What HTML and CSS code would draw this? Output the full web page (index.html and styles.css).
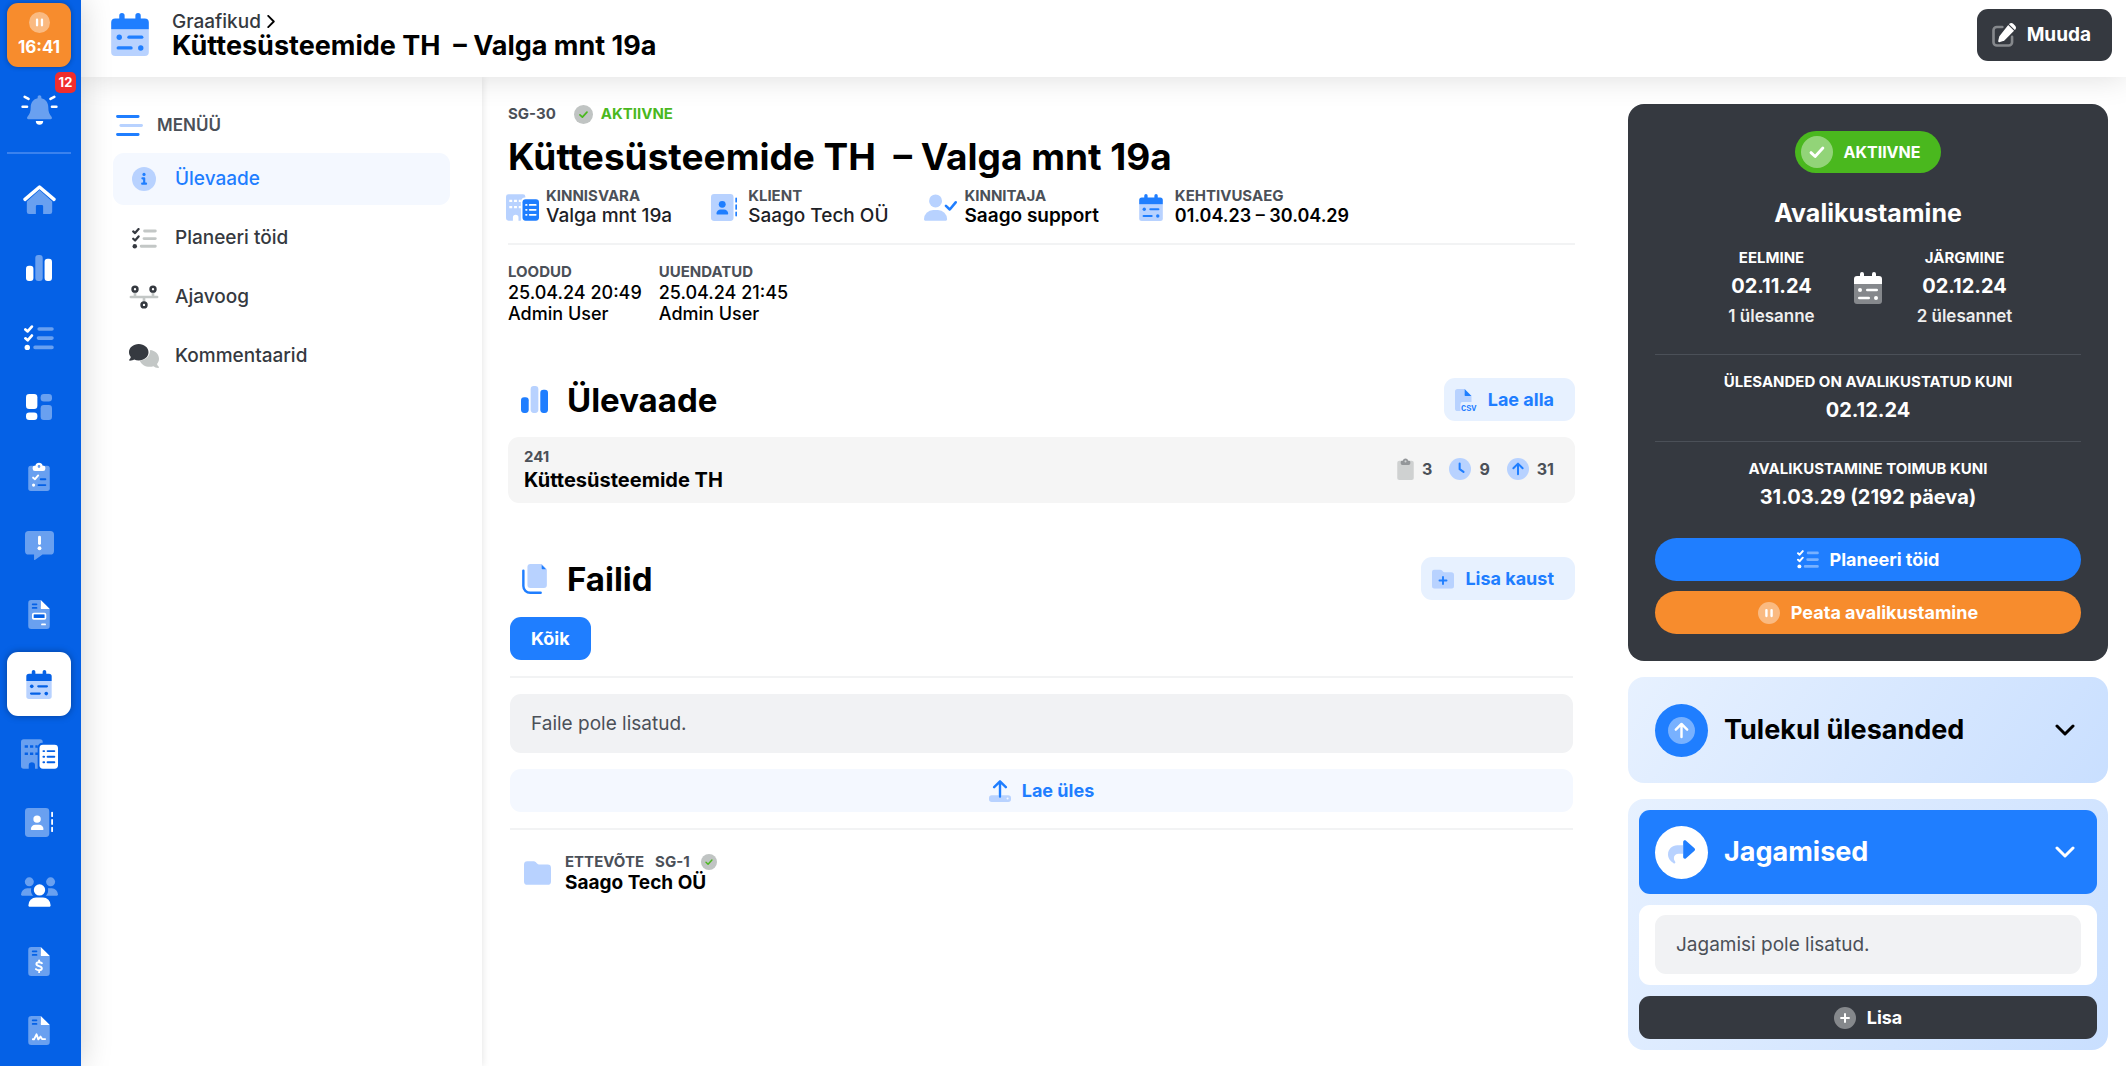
FILE: index.html
```html
<!DOCTYPE html>
<html lang="et">
<head>
<meta charset="utf-8">
<meta name="viewport" content="width=device-width, initial-scale=1">
<title>Küttesüsteemide TH – Valga mnt 19a</title>
<link rel="stylesheet" href="styles.css">
</head>
<body>
<svg class="sprite" aria-hidden="true">
  <symbol id="i-calendar" viewBox="0 0 448 512">
    <path class="s" d="M0 192h448v272a48 48 0 0 1-48 48H48a48 48 0 0 1-48-48z"/>
    <path class="p" d="M0 192v-80a48 48 0 0 1 48-48h48V32a32 32 0 0 1 64 0v32h128V32a32 32 0 0 1 64 0v32h48a48 48 0 0 1 48 48v80z"/>
    <g class="p"><circle cx="96" cy="288" r="32"/><rect x="192" y="268" width="192" height="40" rx="20"/><rect x="64" y="396" width="192" height="40" rx="20"/><circle cx="352" cy="416" r="32"/></g>
  </symbol>
  <symbol id="i-pause" viewBox="0 0 512 512">
    <circle class="s" cx="256" cy="256" r="256"/>
    <rect class="p" x="168" y="160" width="56" height="192" rx="26"/><rect class="p" x="288" y="160" width="56" height="192" rx="26"/>
  </symbol>
  <symbol id="i-bell" viewBox="0 0 640 512">
    <path class="s" d="M320 0c18 0 32 14 32 30v22c72 14 120 76 120 150 0 82 18 122 56 172 14 20 8 42-18 42H130c-26 0-32-22-18-42 38-50 56-90 56-172 0-74 48-136 120-150V30c0-16 14-30 32-30z"/>
    <path class="p" d="M256 448h128a64 64 0 0 1-128 0z"/>
    <g class="pl" stroke-width="46"><path d="M28 200h76M536 200h76M64 30l66 34M576 30l-66 34"/></g>
  </symbol>
  <symbol id="i-home" viewBox="0 0 576 512">
    <path class="s" d="M288 90l224 200v182a40 40 0 0 1-40 40H352V376a24 24 0 0 0-24-24h-80a24 24 0 0 0-24 24v136H104a40 40 0 0 1-40-40V290z"/>
    <path class="pl" stroke-width="60" d="M32 254L288 34l256 220"/>
  </symbol>
  <symbol id="i-chart" viewBox="0 0 448 448">
    <rect class="p" x="0" y="186" width="128" height="262" rx="52"/><rect class="s" x="160" y="0" width="128" height="448" rx="52"/><rect class="p" x="320" y="64" width="128" height="384" rx="52"/>
  </symbol>
  <symbol id="i-tasks" viewBox="0 0 512 432">
    <g class="sl" stroke-width="60"><path d="M258 62h220M246 218h232M188 376h290"/></g>
    <g class="pl" stroke-width="46"><path d="M24 70l38 34 72-82M24 222l38 34 72-82"/></g>
    <circle class="p" cx="56" cy="376" r="46"/>
  </symbol>
  <symbol id="i-dash" viewBox="0 0 448 448">
    <rect class="p" width="196" height="260" rx="56"/><rect class="p" y="320" width="196" height="128" rx="56"/>
    <rect class="s" x="252" width="196" height="128" rx="56"/><rect class="s" x="252" y="188" width="196" height="260" rx="56"/>
  </symbol>
  <symbol id="i-clipboard" viewBox="0 0 384 512">
    <rect class="s" y="64" width="384" height="448" rx="48"/>
    <path class="p" fill-rule="evenodd" d="M112 64h16a66 66 0 0 1 128 0h16a32 32 0 0 1 32 32v24a40 40 0 0 1-40 40H120a40 40 0 0 1-40-40V96a32 32 0 0 1 32-32zm80-8a24 24 0 1 0 0 48 24 24 0 1 0 0-48z"/>
  </symbol>
  <symbol id="i-cliptasks" viewBox="0 0 384 512">
    <use href="#i-clipboard"/>
    <path class="pl" stroke-width="34" d="M88 276l34 28 56-66"/><circle class="p" cx="96" cy="408" r="28"/>
    <path class="cut" stroke-width="34" d="M222 304h82M182 408h122"/>
  </symbol>
  <symbol id="i-message" viewBox="0 0 512 512">
    <path class="s" d="M64 0h384a64 64 0 0 1 64 64v288a64 64 0 0 1-64 64H310L174 510c-8 6-14 2-14-8v-86H64a64 64 0 0 1-64-64V64A64 64 0 0 1 64 0z"/>
    <path class="pl" stroke-width="52" d="M256 110v110"/><circle class="p" cx="256" cy="304" r="34"/>
  </symbol>
  <symbol id="i-file" viewBox="0 0 384 512">
    <path class="s" d="M56 0h168v104a56 56 0 0 0 56 56h104v296a56 56 0 0 1-56 56H56a56 56 0 0 1-56-56V56A56 56 0 0 1 56 0z"/>
    <path class="p" d="M224 0l160 160H240a16 16 0 0 1-16-16z"/>
    <path class="cut" stroke-width="30" d="M80 76h68M80 140h68"/>
  </symbol>
  <symbol id="i-invoice" viewBox="0 0 384 512">
    <use href="#i-file"/><rect class="pl" stroke-width="32" x="84" y="240" width="220" height="92" rx="16"/><rect class="hole" x="100" y="256" width="188" height="60"/><path class="pl" stroke-width="30" d="M244 432h56"/>
  </symbol>
  <symbol id="i-dollar" viewBox="0 0 384 512">
    <use href="#i-file"/><path class="pl" stroke-width="34" d="M244 286c-20-16-96-32-98 14-2 48 100 26 96 78-4 44-76 38-104 12M194 236v30M194 414v30"/>
  </symbol>
  <symbol id="i-sign" viewBox="0 0 384 512">
    <use href="#i-file"/><path class="pl" stroke-width="34" d="M84 412h20l44-88 32 88 40-48 26 44h54"/>
  </symbol>
  <symbol id="i-building" viewBox="0 0 640 512">
    <path class="s" fill-rule="evenodd" d="M48 0h280a48 48 0 0 1 48 48v14a80 80 0 0 0-88 80v370h-46v-60a54 54 0 0 0-108 0v60H48a48 48 0 0 1-48-48V48A48 48 0 0 1 48 0zM64 106v44h56v-44zm92 0v44h56v-44zm92 0v44h40v-44zM64 228v44h56v-44zm92 0v44h56v-44zm92 0v44h40v-44z"/>
    <rect class="p" x="320" y="94" width="320" height="418" rx="60"/>
    <g class="cut" stroke-width="34"><path d="M388 206h12M460 206h116M388 302h12M460 302h116M388 398h12M460 398h116"/></g>
  </symbol>
  <symbol id="i-address" viewBox="0 0 496 512">
    <rect class="s" width="430" height="512" rx="60"/>
    <circle class="p" cx="214" cy="196" r="66"/><path class="p" d="M104 374a80 80 0 0 1 80-80h64a80 80 0 0 1 80 80c0 8-6 14-14 14H118c-8 0-14-6-14-14z"/>
    <path class="pl" stroke-width="32" d="M480 80v64M480 212v72M480 346v64"/>
  </symbol>
  <symbol id="i-users" viewBox="0 0 640 512">
    <g class="s"><circle cx="144" cy="80" r="78"/><circle cx="512" cy="80" r="78"/><path d="M0 300a108 108 0 0 1 108-108h70a140 140 0 0 0 30 128H20c-12 0-20-8-20-20zM640 300a108 108 0 0 0-108-108h-66a140 140 0 0 1-34 128h188c12 0 20-8 20-20z"/></g>
    <circle class="p" cx="320" cy="220" r="98"/><path class="p" d="M128 484a132 132 0 0 1 132-132h120a132 132 0 0 1 132 132c0 16-12 28-28 28H156c-16 0-28-12-28-28z"/>
  </symbol>
  <symbol id="i-usercheck" viewBox="0 0 640 512">
    <circle class="s" cx="224" cy="128" r="126"/><path class="s" d="M0 482a178 178 0 0 1 178-178h92a178 178 0 0 1 178 178c0 16-14 30-30 30H30c-16 0-30-14-30-30z"/>
    <path class="pl" stroke-width="50" d="M426 224l74 70 114-138"/>
  </symbol>
  <symbol id="i-menu" viewBox="0 0 512 400">
    <path class="pl" stroke-width="56" d="M28 28h392M28 372h392"/><path class="sl" stroke-width="56" d="M92 200h392"/>
  </symbol>
  <symbol id="i-info" viewBox="0 0 512 512">
    <circle class="s" cx="256" cy="256" r="256"/><circle class="p" cx="256" cy="158" r="34"/><path class="pl" stroke-width="46" d="M222 242h38v112M216 356h84"/>
  </symbol>
  <symbol id="i-timeline" viewBox="0 0 640 512">
    <path class="sl" stroke-width="56" d="M40 256h560M128 160v96M512 160v96M320 256v90"/>
    <g class="ring" stroke-width="54"><circle cx="128" cy="88" r="52"/><circle cx="512" cy="88" r="52"/><circle cx="320" cy="424" r="52"/></g>
  </symbol>
  <symbol id="i-comments" viewBox="0 0 640 512">
    <path class="s" d="M450 130c106 10 190 84 190 186 0 44-16 80-42 110 8 30 24 46 38 58 8 10 2 26-12 26-44 0-82-20-104-36-120 36-250-14-290-118 120-6 226-90 220-226z"/>
    <path class="p" d="M208 0c116 0 208 78 208 176s-92 176-208 176c-36 0-70-8-98-20-22 14-54 24-92 24-14 0-20-16-10-26 14-12 26-28 30-54C14 246 0 212 0 176 0 78 92 0 208 0z"/>
  </symbol>
  <symbol id="i-check" viewBox="0 0 512 512">
    <circle class="s" cx="256" cy="256" r="256"/><path class="pl" stroke-width="46" d="M160 266l66 62 124-136"/>
  </symbol>
  <symbol id="i-clock" viewBox="0 0 512 512">
    <circle class="s" cx="256" cy="256" r="256"/><path class="pl" stroke-width="48" d="M248 126v134l90 62"/>
  </symbol>
  <symbol id="i-up" viewBox="0 0 512 512">
    <circle class="s" cx="256" cy="256" r="256"/><path class="pl" stroke-width="46" d="M256 378V136M148 240l108-108 108 108"/>
  </symbol>
  <symbol id="i-plus" viewBox="0 0 512 512">
    <circle class="s" cx="256" cy="256" r="256"/><path class="pl" stroke-width="46" d="M256 164v184M164 256h184"/>
  </symbol>
  <symbol id="i-files" viewBox="0 0 448 544">
    <path class="s" d="M150 0h204l94 94v286a54 54 0 0 1-54 54H150a54 54 0 0 1-54-54V54a54 54 0 0 1 54-54z"/>
    <path class="p" d="M354 14l80 80h-66a14 14 0 0 1-14-14z"/>
    <path class="pl" stroke-width="44" d="M22 120v278a124 124 0 0 0 124 124h190"/>
  </symbol>
  <symbol id="i-folder" viewBox="0 0 512 448">
    <path class="s" d="M64 0h112c24 0 44 10 58 28l20 22c8 8 16 14 30 14h164a64 64 0 0 1 64 64v256a64 64 0 0 1-64 64H64a64 64 0 0 1-64-64V64A64 64 0 0 1 64 0z"/>
  </symbol>
  <symbol id="i-folderplus" viewBox="0 0 512 448">
    <use href="#i-folder"/><path class="pl" stroke-width="44" d="M256 176v164M174 258h164"/>
  </symbol>
  <symbol id="i-upload" viewBox="0 0 512 512">
    <path class="s" fill-rule="evenodd" d="M64 352h160v32h64v-32h160a64 64 0 0 1 64 64v32a64 64 0 0 1-64 64H64a64 64 0 0 1-64-64v-32a64 64 0 0 1 64-64zm368 56a24 24 0 1 0 0 48 24 24 0 1 0 0-48z"/>
    <path class="pl" stroke-width="56" d="M256 384V36M120 166L256 30l136 136"/>
  </symbol>
  <symbol id="i-edit" viewBox="0 0 512 512">
    <path class="sl" stroke-width="56" d="M220 84H104a72 72 0 0 0-72 72v252a72 72 0 0 0 72 72h252a72 72 0 0 0 72-72V292"/>
    <path class="p" d="M346 42l124 124-206 206c-8 8-16 12-26 14l-84 22c-14 2-26-8-22-24l20-84c2-10 8-20 14-26zM370 18c24-24 58-24 82 0l42 42c24 24 24 58 0 82l-8 8L362 26z"/>
  </symbol>
  <symbol id="i-share" viewBox="0 0 512 448">
    <path class="s" d="M288 96v160h-80c-62 0-96 30-96 84 0 32 10 50 22 62 8 8 8 20 4 28-4 10-14 16-26 10C52 404 0 346 0 272 0 166 82 96 176 96z"/>
    <path class="p" d="M288 32c0-28 32-42 54-22l160 144c14 12 14 32 0 44L342 342c-22 20-54 6-54-22z"/>
  </symbol>
  <symbol id="i-chevron" viewBox="0 0 20 12"><path class="pl" stroke-width="3" d="M2 2l8 8 8-8"/></symbol>
  <symbol id="i-angle" viewBox="0 0 8 14"><path class="pl" stroke-width="2" d="M1 1l6 6-6 6"/></symbol>
</svg>

<div class="app">
  <aside class="rail">
    <button class="timer"><svg class="ic-21"><use href="#i-pause"/></svg>16:41</button>
    <a class="alerts" href="#" aria-label="Teavitused"><svg class="w-37 h-30"><use href="#i-bell"/></svg><span class="badge">12</span></a>
    <nav class="rail-nav">
      <a href="#" aria-label="Avaleht"><svg class="w-33 h-29"><use href="#i-home"/></svg></a>
      <a href="#" aria-label="Statistika"><svg class="w-26 h-26"><use href="#i-chart"/></svg></a>
      <a href="#" aria-label="Tööd"><svg class="w-30 h-26"><use href="#i-tasks"/></svg></a>
      <a href="#" aria-label="Töölaud"><svg class="w-26 h-26"><use href="#i-dash"/></svg></a>
      <a href="#" aria-label="Ülesanded"><svg class="w-22 h-29"><use href="#i-cliptasks"/></svg></a>
      <a href="#" aria-label="Teated"><svg class="w-29 h-29"><use href="#i-message"/></svg></a>
      <a href="#" aria-label="Dokumendid"><svg class="w-22 h-29"><use href="#i-invoice"/></svg></a>
      <a class="active" href="#" aria-label="Graafikud"><svg class="w-26 h-29"><use href="#i-calendar"/></svg></a>
      <a href="#" aria-label="Kinnisvara"><svg class="w-37 h-30"><use href="#i-building"/></svg></a>
      <a href="#" aria-label="Kliendid"><svg class="w-28 h-29"><use href="#i-address"/></svg></a>
      <a href="#" aria-label="Kasutajad"><svg class="w-37 h-30"><use href="#i-users"/></svg></a>
      <a href="#" aria-label="Arved"><svg class="w-22 h-29"><use href="#i-dollar"/></svg></a>
      <a href="#" aria-label="Lepingud"><svg class="w-22 h-29"><use href="#i-sign"/></svg></a>
    </nav>
  </aside>

  <div class="page">
    <header class="topbar">
      <svg class="w-38 h-43 blue"><use href="#i-calendar"/></svg>
      <div class="crumbs">
        <a href="#">Graafikud <svg class="angle"><use href="#i-angle"/></svg></a>
        <strong>Küttesüsteemide TH&nbsp; – Valga mnt 19a</strong>
      </div>
      <button class="btn dark edit"><svg class="ic-24"><use href="#i-edit"/></svg>Muuda</button>
    </header>

    <div class="body">
      <nav class="menu">
        <h2 class="menu-title"><svg class="w-27 h-21 blue"><use href="#i-menu"/></svg>MENÜÜ</h2>
        <a class="active" href="#"><span class="menu-ic"><svg class="ic-24 blue"><use href="#i-info"/></svg></span>Ülevaade</a>
        <a href="#"><span class="menu-ic"><svg class="w-25 h-21 gray"><use href="#i-tasks"/></svg></span>Planeeri töid</a>
        <a href="#"><span class="menu-ic"><svg class="w-30 h-24 gray"><use href="#i-timeline"/></svg></span>Ajavoog</a>
        <a href="#"><span class="menu-ic"><svg class="w-30 h-24 gray"><use href="#i-comments"/></svg></span>Kommentaarid</a>
      </nav>

      <main class="content">
        <div class="code"><span>SG-30</span><svg class="ic-19 ok"><use href="#i-check"/></svg><span class="green">AKTIIVNE</span></div>
        <h1>Küttesüsteemide TH&nbsp; – Valga mnt 19a</h1>
        <dl class="meta">
          <div><span class="meta-ic"><svg class="w-33 h-27 blue"><use href="#i-building"/></svg></span><span><dt>KINNISVARA</dt><dd>Valga mnt 19a</dd></span></div>
          <div><span class="meta-ic"><svg class="w-26 h-27 blue"><use href="#i-address"/></svg></span><span><dt>KLIENT</dt><dd>Saago Tech OÜ</dd></span></div>
          <div><span class="meta-ic"><svg class="w-33 h-27 blue"><use href="#i-usercheck"/></svg></span><span><dt>KINNITAJA</dt><dd class="strong">Saago support</dd></span></div>
          <div><span class="meta-ic"><svg class="w-24 h-27 blue"><use href="#i-calendar"/></svg></span><span><dt>KEHTIVUSAEG</dt><dd class="strong range">01.04.23 – 30.04.29</dd></span></div>
        </dl>
        <dl class="stamps">
          <div><dt>LOODUD</dt><dd>25.04.24 20:49</dd><dd>Admin User</dd></div>
          <div><dt>UUENDATUD</dt><dd>25.04.24 21:45</dd><dd>Admin User</dd></div>
        </dl>

        <section>
          <div class="section-head">
            <svg class="w-27 h-27 blue"><use href="#i-chart"/></svg><h2>Ülevaade</h2>
            <button class="btn soft">
              <svg class="ic-22" viewBox="0 0 512 512">
                <path class="s" d="M60 0h164v104a56 56 0 0 0 56 56h104v144H176a50 50 0 0 0-50 50v158H60a60 60 0 0 1-60-60V60A60 60 0 0 1 60 0z"/>
                <path class="p" d="M224 0l160 160H240a16 16 0 0 1-16-16z"/>
                <text class="csv" x="140" y="508">CSV</text>
              </svg>Lae alla</button>
          </div>
          <div class="summary">
            <div><span class="num">241</span><strong>Küttesüsteemide TH</strong></div>
            <ul class="counts">
              <li><svg class="w-17 h-22 dim"><use href="#i-clipboard"/></svg>3</li>
              <li><svg class="ic-22 blue"><use href="#i-clock"/></svg>9</li>
              <li><svg class="ic-22 blue"><use href="#i-up"/></svg>31</li>
            </ul>
          </div>
        </section>

        <section>
          <div class="section-head">
            <svg class="w-27 h-30 blue"><use href="#i-files"/></svg><h2>Failid</h2>
            <button class="btn soft"><svg class="ic-22"><use href="#i-folderplus"/></svg>Lisa kaust</button>
          </div>
          <div class="files">
            <button class="btn primary all">Kõik</button>
            <div class="file-box">
              <p class="empty">Faile pole lisatud.</p>
              <button class="btn pale"><svg class="ic-22"><use href="#i-upload"/></svg>Lae üles</button>
            </div>
            <a class="folder" href="#">
              <svg class="w-27 h-24 blue"><use href="#i-folder"/></svg>
              <span><span class="folder-top">ETTEVÕTE<span>SG-1</span><svg class="ic-16 ok"><use href="#i-check"/></svg></span><strong>Saago Tech OÜ</strong></span>
            </a>
          </div>
        </section>
      </main>

      <aside class="side">
        <section class="card publish">
          <span class="pill"><svg class="ic-32"><use href="#i-check"/></svg>AKTIIVNE</span>
          <h2>Avalikustamine</h2>
          <div class="dates">
            <div><small>EELMINE</small><b>02.11.24</b><span>1 ülesanne</span></div>
            <svg class="w-28 h-32"><use href="#i-calendar"/></svg>
            <div><small>JÄRGMINE</small><b>02.12.24</b><span>2 ülesannet</span></div>
          </div>
          <div class="until"><small>ÜLESANDED ON AVALIKUSTATUD KUNI</small><b>02.12.24</b></div>
          <div class="until"><small>AVALIKUSTAMINE TOIMUB KUNI</small><b>31.03.29 (2192 päeva)</b></div>
          <div class="actions">
            <button class="btn primary round"><svg class="w-22 h-19"><use href="#i-tasks"/></svg>Planeeri töid</button>
            <button class="btn orange round"><svg class="ic-22"><use href="#i-pause"/></svg>Peata avalikustamine</button>
          </div>
        </section>
        <section class="card light">
          <button class="fold"><span class="disc"><svg class="ic-27"><use href="#i-up"/></svg></span>Tulekul ülesanded<svg class="chev"><use href="#i-chevron"/></svg></button>
        </section>
        <section class="card light">
          <button class="fold open"><span class="disc"><svg class="w-27 h-24"><use href="#i-share"/></svg></span>Jagamised<svg class="chev"><use href="#i-chevron"/></svg></button>
          <div class="shares"><p class="empty">Jagamisi pole lisatud.</p></div>
          <button class="btn dark"><svg class="ic-22"><use href="#i-plus"/></svg>Lisa</button>
        </section>
      </aside>
    </div>
  </div>
</div>
</body>
</html>
```
FILE: styles.css
```css
:root {
  --blue: #1f7eff;
  --rail: #0561e6;
  --dark: #353940;
  --muted: #4b5058;
  --green: #4ab81e;
  --orange: #f78c2d;
  --tone: #fff;
  --tone-soft: rgba(255, 255, 255, .4);
  --gap-tone: var(--rail);
}

* { box-sizing: border-box; }

body {
  margin: 0;
  color: #000;
  background: #fff;
  font: 500 18px/22px Inter, "Open Sans", sans-serif;
}

h1, h2, p, dl, dd, ul { margin: 0; padding: 0; }
a { color: inherit; text-decoration: none; }
button { border: 0; margin: 0; padding: 0; font: inherit; color: inherit; cursor: pointer; }
strong, b { font-weight: 700; }

/* Two-tone icons */
.sprite { position: absolute; width: 0; height: 0; }
svg { flex: none; display: block; }
.p { fill: var(--tone); }
.s { fill: var(--tone-soft); }
.pl, .sl, .cut, .ring { fill: none; stroke: var(--tone); stroke-linecap: round; stroke-linejoin: round; }
.sl { stroke: var(--tone-soft); }
.cut { stroke: var(--gap-tone); }
.hole { fill: var(--gap-tone); }
.csv { fill: var(--tone); font: 700 200px "Liberation Mono", monospace; }
.blue, .soft, .pale { --tone: var(--blue); --tone-soft: #b8d2ff; --gap-tone: #fff; }
.gray { --tone: var(--dark); --tone-soft: #c3c7c6; --gap-tone: #fff; }
.dim { --tone: #939699; --tone-soft: #cfd1d1; --gap-tone: #f5f5f5; }
.ok { --tone: var(--green); --tone-soft: #c0c4c3; }

.ic-16 { width: 16px; height: 16px; }
.ic-19 { width: 19px; height: 19px; }
.ic-21 { width: 21px; height: 21px; }
.ic-22 { width: 22px; height: 22px; }
.ic-24 { width: 24px; height: 24px; }
.ic-27 { width: 27px; height: 27px; }
.ic-32 { width: 32px; height: 32px; }
.w-17 { width: 17px; } .w-22 { width: 22px; } .w-24 { width: 24px; } .w-25 { width: 25px; }
.w-26 { width: 26px; } .w-27 { width: 27px; } .w-28 { width: 28px; } .w-29 { width: 29px; }
.w-30 { width: 30px; } .w-33 { width: 33px; } .w-37 { width: 37px; } .w-38 { width: 38px; }
.h-19 { height: 19px; } .h-21 { height: 21px; } .h-22 { height: 22px; } .h-24 { height: 24px; }
.h-26 { height: 26px; } .h-27 { height: 27px; } .h-29 { height: 29px; } .h-30 { height: 30px; }
.h-32 { height: 32px; } .h-43 { height: 43px; }

.app { display: flex; min-height: 100vh; }

/* Icon rail */
.rail {
  position: relative;
  z-index: 2;
  flex: none;
  width: 81px;
  padding: 3px 10px 3px 7px;
  display: flex;
  flex-direction: column;
  background: var(--rail);
  box-shadow: 0 0 32px rgba(0, 0, 0, .18);
}
.timer {
  height: 64px;
  display: flex;
  flex-direction: column;
  align-items: center;
  justify-content: center;
  gap: 3px;
  border-radius: 11px;
  background: var(--orange);
  color: #fff;
  font-weight: 700;
  font-size: 17px;
  box-shadow: 0 0 5px rgba(0, 0, 0, .3);
}
.alerts {
  position: relative;
  height: 87px;
  display: flex;
  justify-content: center;
  padding-top: 28px;
  border-bottom: 2px solid #3b82ee;
}
.badge {
  position: absolute;
  top: 5px;
  right: -5px;
  width: 21px;
  border-radius: 5px;
  background: #f02d2d;
  color: #fff;
  font: 700 13px/21px Inter, sans-serif;
  text-align: center;
}
.rail-nav {
  flex: 1;
  margin-top: 13px;
  display: flex;
  flex-direction: column;
  justify-content: space-between;
}
.rail-nav a { height: 64px; display: grid; place-items: center; border-radius: 11px; }
.rail-nav .active {
  --tone: var(--rail);
  --tone-soft: #b8d2ff;
  background: #fff;
  box-shadow: 0 0 7px rgba(0, 0, 0, .35);
}

/* Top bar */
.page { flex: 1; min-width: 0; display: flex; flex-direction: column; }
.topbar {
  position: relative;
  z-index: 1;
  height: 77px;
  display: flex;
  align-items: center;
  padding: 0 14px 8px 30px;
  background: #fff;
  box-shadow: 0 0 32px rgba(0, 0, 0, .14);
}
.crumbs { display: flex; flex-direction: column; margin-left: 23px; }
.crumbs a { display: flex; align-items: center; gap: 6px; color: var(--dark); font-size: 19px; --tone: #000; }
.crumbs strong { font-size: 27px; line-height: 26px; }
.angle { width: 8px; height: 13px; }

/* Buttons */
.btn {
  height: 43px;
  display: flex;
  align-items: center;
  justify-content: center;
  gap: 11px;
  border-radius: 11px;
  padding: 0 21px;
  font-weight: 700;
  font-size: 18px;
  white-space: nowrap;
}
.btn.dark { background: var(--dark); color: #fff; }
.btn.primary { background: var(--blue); color: #fff; }
.btn.orange { background: var(--orange); color: #fff; }
.btn.soft { margin-left: auto; padding: 0 21px 0 11px; background: #e7f1ff; color: var(--blue); }
.btn.pale { background: #f4f8ff; color: var(--blue); }
.btn.round { border-radius: 22px; }
.btn.edit { height: 52px; margin-left: auto; padding: 0 21px 0 15px; font-size: 19px; }

/* Left menu */
.body { flex: 1; display: flex; }
.menu {
  flex: none;
  width: 401px;
  padding: 33px 32px 0;
  display: flex;
  flex-direction: column;
  gap: 7px;
  box-shadow: 0 0 8px rgba(0, 0, 0, .12);
}
.menu-title {
  height: 36px;
  display: flex;
  align-items: center;
  gap: 14px;
  padding: 0 0 6px 3px;
  font-size: 17px;
  font-weight: 600;
  color: var(--muted);
}
.menu a { height: 52px; display: flex; align-items: center; gap: 16px; padding-left: 16px; border-radius: 11px; color: var(--dark); font-size: 19px; }
.menu .active { background: #f4f8ff; color: var(--blue); }
.menu-ic { width: 30px; display: grid; place-items: center; }

/* Main column */
.content { flex: 1; min-width: 0; padding: 27px 53px 0 26px; }
.code { display: flex; align-items: center; height: 20px; font-size: 15px; font-weight: 700; color: var(--muted); }
.code svg { margin: 0 8px 0 18px; }
.green { color: var(--green); }
h1 { margin-top: 11px; font-size: 37px; line-height: 44px; font-weight: 700; }
.meta { display: flex; gap: 32px; margin: 8px 0 0 -6px; padding-bottom: 16px; }
.meta > div { display: flex; align-items: center; gap: 4px; }
.meta-ic { width: 40px; display: grid; place-items: center; }
dt { font-size: 15px; line-height: 21px; font-weight: 700; color: var(--muted); }
.meta dt { line-height: 18px; }
.meta dd { font-size: 19px; line-height: 22px; color: #1d2126; }
.meta dd.strong { font-weight: 600; color: #000; }
.meta dd.range { font-size: 18px; }
.stamps { display: flex; gap: 17px; padding-top: 16px; border-top: 2px solid #f2f3f4; }
.stamps dd { line-height: 21px; }

.section-head { display: flex; align-items: center; height: 43px; margin-top: 54px; padding-left: 13px; }
.section-head h2 { margin-left: 19px; font-size: 33px; line-height: 40px; font-weight: 700; }
.summary {
  display: flex;
  align-items: center;
  justify-content: space-between;
  height: 66px;
  margin-top: 16px;
  padding: 0 21px 2px 16px;
  border-radius: 11px;
  background: #f5f5f5;
}
.num { display: block; font-size: 15px; font-weight: 700; color: var(--muted); }
.summary strong { display: block; font-size: 20px; line-height: 24px; }
.counts { display: flex; gap: 17px; list-style: none; color: var(--muted); font-size: 16px; font-weight: 700; }
.counts li { display: flex; align-items: center; gap: 8px; }

.files { padding: 0 2px; }
.btn.all { margin-top: 17px; }
.file-box { margin: 16px 0; padding: 16px 0; border: solid #f2f3f4; border-width: 2px 0; }
.file-box .btn { width: 100%; margin-top: 16px; }
.empty { padding: 0 21px; border-radius: 11px; background: #f1f2f4; color: var(--muted); font-size: 19px; line-height: 59px; font-weight: 400; }
.folder { display: flex; align-items: center; gap: 14px; padding: 6px 14px; }
.folder-top { display: flex; align-items: center; gap: 11px; font-size: 15px; line-height: 20px; font-weight: 700; color: var(--muted); }
.folder strong { display: block; font-size: 19px; }

/* Right column */
.side { flex: none; width: 498px; padding: 27px 18px 16px 0; display: flex; flex-direction: column; gap: 16px; }
.card { border-radius: 16px; }
.publish { padding: 27px; background: var(--dark); color: #fff; text-align: center; }
.pill { display: inline-flex; align-items: center; gap: 11px; height: 42px; padding: 0 21px 0 6px; border-radius: 21px; background: var(--green); font-size: 16px; font-weight: 700; }
.publish h2 { margin-top: 22px; font-size: 25px; line-height: 36px; font-weight: 700; }
.publish small { display: block; font-size: 15px; line-height: 24px; font-weight: 700; }
.publish b { display: block; font-size: 20px; line-height: 32px; }
.dates { display: grid; grid-template-columns: 1fr auto 1fr; align-items: center; gap: 28px; margin: 15px 62px 0; padding-bottom: 24px; }
.dates span { display: block; font-size: 17px; line-height: 28px; font-weight: 600; color: #eee; white-space: nowrap; }
.until { padding: 15px 0; border-top: 1px solid #4b5058; }
.actions { display: flex; flex-direction: column; gap: 10px; margin-top: 10px; }
.light { display: flex; flex-direction: column; gap: 11px; padding: 11px; background: linear-gradient(125deg, #e7f1ff, #c9dfff); }
.fold {
  display: flex;
  align-items: center;
  gap: 16px;
  height: 84px;
  padding: 0 22px 0 16px;
  border-radius: 11px;
  background: none;
  --tone: #000;
  font-size: 27px;
  line-height: 32px;
  font-weight: 700;
}
.fold.open { background: var(--blue); color: #fff; --tone: #fff; }
.disc { width: 53px; height: 53px; border-radius: 50%; display: grid; place-items: center; background: var(--blue); --tone: #fff; }
.open .disc { background: #fff; --tone: var(--blue); --tone-soft: #b8d2ff; }
.chev { width: 20px; height: 12px; margin-left: auto; }
.shares { padding: 10px 16px 11px; border-radius: 11px; background: #fff; }
```
